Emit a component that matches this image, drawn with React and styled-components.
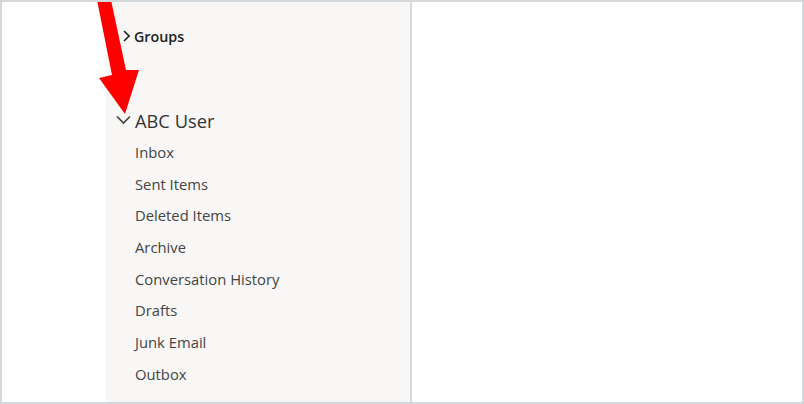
import React from 'react';
import styled, { createGlobalStyle } from 'styled-components';

const GlobalStyle = createGlobalStyle`
    html, body {
        margin: 0;
        padding: 0;
        background: #ffffff;
    }
    body {
        font-family: "Open Sans", "Noto Sans", sans-serif;
    }
`;

const Frame = styled.div`
    position: relative;
    box-sizing: border-box;
    width: 804px;
    height: 404px;
    border: 2px solid #d5d8db;
    display: flex;
    overflow: hidden;
    background: #ffffff;
`;

const Gutter = styled.div`
    width: 104px;
    background: #ffffff;
`;

const Sidebar = styled.nav`
    width: 304px;
    background: #f8f7f6;
    border-right: 2px solid #d9d9d9;
    padding-top: 18px;
`;

const Main = styled.main`
    flex: 1;
    background: #ffffff;
`;

const Header = styled.div`
    display: flex;
    align-items: center;
    height: 32px;
    margin-top: ${props => props.gap || 0}px;
    padding-left: ${props => props.indent}px;
    color: ${props => props.color};
    font-size: ${props => props.size}px;
    font-weight: ${props => props.weight};
    letter-spacing: ${props => props.spacing || 0}px;
`;

const Caret = styled.span`
    display: flex;
    align-items: center;
    justify-content: center;
    width: ${props => props.w}px;
    margin-right: ${props => props.mr}px;
`;

const Folder = styled.div`
    height: 31.7px;
    display: flex;
    align-items: center;
    padding-left: 29px;
    font-size: 14.8px;
    color: #444444;
`;

const Arrow = styled.svg`
    position: absolute;
    left: 0;
    top: 0;
    pointer-events: none;
`;

const folders = [
    'Inbox',
    'Sent Items',
    'Deleted Items',
    'Archive',
    'Conversation History',
    'Drafts',
    'Junk Email',
    'Outbox',
];

const App = () => {
    return (
        <>
            <GlobalStyle />
            <Frame>
                <Gutter />
                <Sidebar>
                    <Header indent={16} color="#222222" size={14.3} weight={600}>
                        <Caret w={8} mr={4}>
                            <svg width="7" height="12" viewBox="0 0 7 12">
                                <path d="M1 1 L6 6 L1 11" fill="none" stroke="#222" strokeWidth="1.6" />
                            </svg>
                        </Caret>
                        Groups
                    </Header>
                    <Header gap={52} indent={10} color="#333333" size={18.3} weight={400}>
                        <Caret w={15} mr={4}>
                            <svg width="15" height="10" viewBox="0 0 15 10">
                                <path d="M1 1.5 L7.5 8 L14 1.5" fill="none" stroke="#444" strokeWidth="1.7" />
                            </svg>
                        </Caret>
                        ABC User
                    </Header>
                    {folders.map(name => (
                        <Folder key={name}>{name}</Folder>
                    ))}
                </Sidebar>
                <Main />
                <Arrow width="804" height="404" viewBox="0 0 804 404">
                    <polygon
                        points="95,-2 109,-2 124,68 137,68 123,112 97,76 110,73"
                        fill="#ff0000"
                    />
                </Arrow>
            </Frame>
        </>
    );
};

export default App;
